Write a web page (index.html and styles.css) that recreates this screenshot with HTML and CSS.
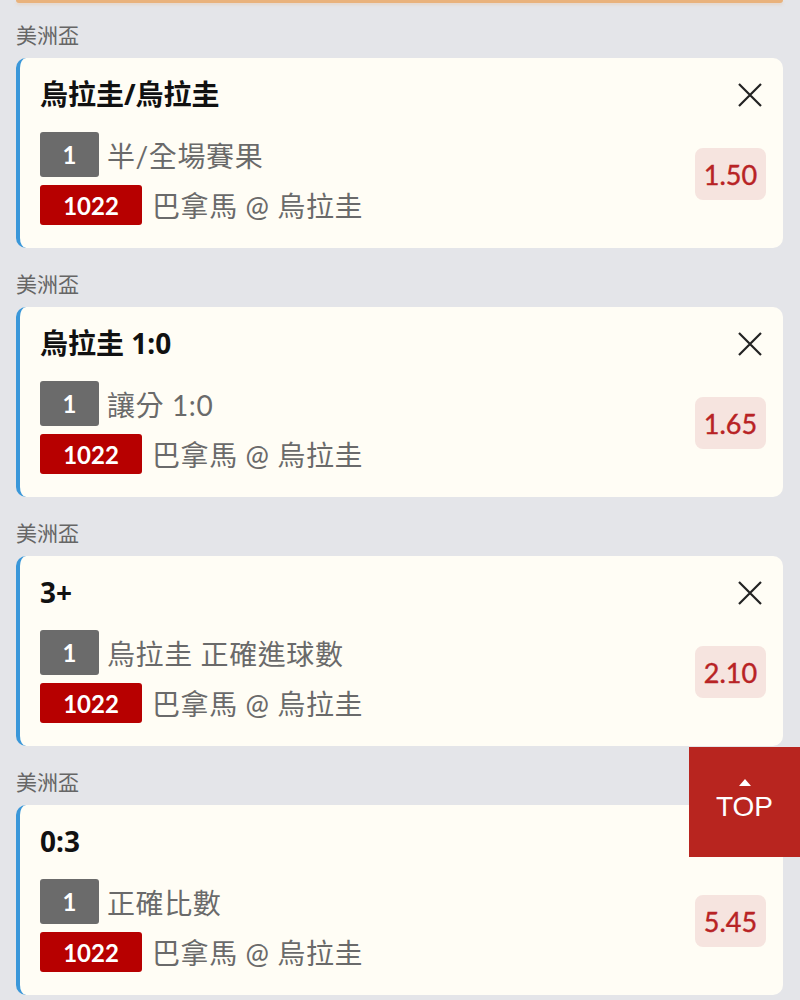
FILE: index.html
```html
<!DOCTYPE html>
<html lang="zh-Hant">
<head>
<meta charset="utf-8">
<link rel="stylesheet" href="styles.css">
</head>
<body>
<div class="page">
  <div class="prev-edge"></div>

  <div class="group">
    <div class="league">美洲盃</div>
    <div class="card">
      <div class="main">
        <div class="title">烏拉圭/烏拉圭</div>
        <div class="row row-bet"><span class="tag tag-gray">1</span><span class="desc">半/全場賽果</span></div>
        <div class="row row-match"><span class="tag tag-red">1022</span><span class="desc">巴拿馬 @ 烏拉圭</span></div>
      </div>
      <div class="side">
        <svg class="close" viewBox="0 0 26 26" width="26" height="26"><path d="M2 2L24 24M24 2L2 24" stroke="#222" stroke-width="2.2" fill="none"/></svg>
        <div class="odds">1.50</div>
      </div>
    </div>
  </div>

  <div class="group">
    <div class="league">美洲盃</div>
    <div class="card">
      <div class="main">
        <div class="title">烏拉圭 1:0</div>
        <div class="row row-bet"><span class="tag tag-gray">1</span><span class="desc">讓分 1:0</span></div>
        <div class="row row-match"><span class="tag tag-red">1022</span><span class="desc">巴拿馬 @ 烏拉圭</span></div>
      </div>
      <div class="side">
        <svg class="close" viewBox="0 0 26 26" width="26" height="26"><path d="M2 2L24 24M24 2L2 24" stroke="#222" stroke-width="2.2" fill="none"/></svg>
        <div class="odds">1.65</div>
      </div>
    </div>
  </div>

  <div class="group">
    <div class="league">美洲盃</div>
    <div class="card">
      <div class="main">
        <div class="title">3+</div>
        <div class="row row-bet"><span class="tag tag-gray">1</span><span class="desc">烏拉圭 正確進球數</span></div>
        <div class="row row-match"><span class="tag tag-red">1022</span><span class="desc">巴拿馬 @ 烏拉圭</span></div>
      </div>
      <div class="side">
        <svg class="close" viewBox="0 0 26 26" width="26" height="26"><path d="M2 2L24 24M24 2L2 24" stroke="#222" stroke-width="2.2" fill="none"/></svg>
        <div class="odds">2.10</div>
      </div>
    </div>
  </div>

  <div class="group">
    <div class="league">美洲盃</div>
    <div class="card">
      <div class="main">
        <div class="title">0:3</div>
        <div class="row row-bet"><span class="tag tag-gray">1</span><span class="desc">正確比數</span></div>
        <div class="row row-match"><span class="tag tag-red">1022</span><span class="desc">巴拿馬 @ 烏拉圭</span></div>
      </div>
      <div class="side">
        <svg class="close" viewBox="0 0 26 26" width="26" height="26"><path d="M2 2L24 24M24 2L2 24" stroke="#222" stroke-width="2.2" fill="none"/></svg>
        <div class="odds">5.45</div>
      </div>
    </div>
  </div>
</div>

<div class="top-btn">
  <svg class="top-arrow" viewBox="0 0 14 8" width="14" height="8"><path d="M7 0L14 8H0Z" fill="#fff"/></svg>
  <span>TOP</span>
</div>
</body>
</html>
```

FILE: styles.css
```css
html, body {
  margin: 0;
  padding: 0;
  background: #e4e5e9;
}
body {
  font-family: Lato, "Noto Sans CJK TC", sans-serif;
  overflow: hidden;
  height: 1000px;
}
.page {
  padding: 0 17px 0 16px;
}
.prev-edge {
  height: 3px;
  background: #e9b27c;
  border-radius: 0 0 8px 8px;
  box-shadow: 0 2px 3px rgba(230, 190, 150, 0.35);
}
.league {
  font-family: "Noto Sans CJK TC", sans-serif;
  font-size: 21px;
  line-height: 28px;
  color: #666;
  padding: 17px 0 10px 0;
}
.group + .group .league {
  padding-top: 21px;
}
.card {
  background: #fffdf5;
  border-left: 4px solid #3a97d9;
  border-radius: 10px;
  padding: 20px 17px 23px 20px;
  display: flex;
  height: 190px;
  box-sizing: border-box;
}
.main {
  flex: 1;
  display: flex;
  flex-direction: column;
}
.title {
  font-family: "Noto Sans", "Noto Sans CJK TC", sans-serif;
  font-weight: 700;
  font-size: 28px;
  line-height: 36px;
  color: #111;
  margin-bottom: 18px;
  margin-top: -2px;
  padding-bottom: 2px;
}
.row {
  display: flex;
  align-items: center;
}
.row-bet {
  height: 45px;
  margin-bottom: 8px;
}
.row-match {
  height: 40px;
}
.tag {
  display: flex;
  align-items: center;
  justify-content: center;
  color: #fff;
  font-family: Lato, sans-serif;
  font-weight: 700;
  font-size: 24px;
  border-radius: 3px;
  box-sizing: border-box;
}
.tag-gray {
  background: #6b6b6b;
  width: 59px;
  height: 45px;
  margin-right: 8px;
}
.tag-red {
  background: #b70000;
  width: 102px;
  height: 40px;
  margin-right: 10px;
}
.desc {
  font-family: Lato, "Noto Sans CJK TC", sans-serif;
  font-size: 28px;
  color: #6a6a6a;
  letter-spacing: 0.6px;
}
.side {
  display: flex;
  flex-direction: column;
  align-items: flex-end;
}
.close {
  display: block;
  margin: 4px 3px 0 0;
}
.odds {
  margin-top: 40px;
  width: 71px;
  height: 52px;
  border-radius: 8px;
  background: #f6e4df;
  color: #b82325;
  font-family: Lato, sans-serif;
  font-size: 27px;
  -webkit-text-stroke: 0.4px #b82325;
  display: flex;
  align-items: center;
  justify-content: center;
}
.top-btn {
  position: fixed;
  left: 689px;
  top: 747px;
  width: 111px;
  height: 110px;
  background: #b8251f;
  color: #fff;
  display: flex;
  flex-direction: column;
  align-items: center;
  justify-content: center;
  font-family: "Liberation Sans", Arial, sans-serif;
  font-size: 28px;
}
.top-arrow {
  display: block;
  width: 12px;
  height: 7px;
  margin-bottom: 5px;
  margin-top: -2px;
}
```
